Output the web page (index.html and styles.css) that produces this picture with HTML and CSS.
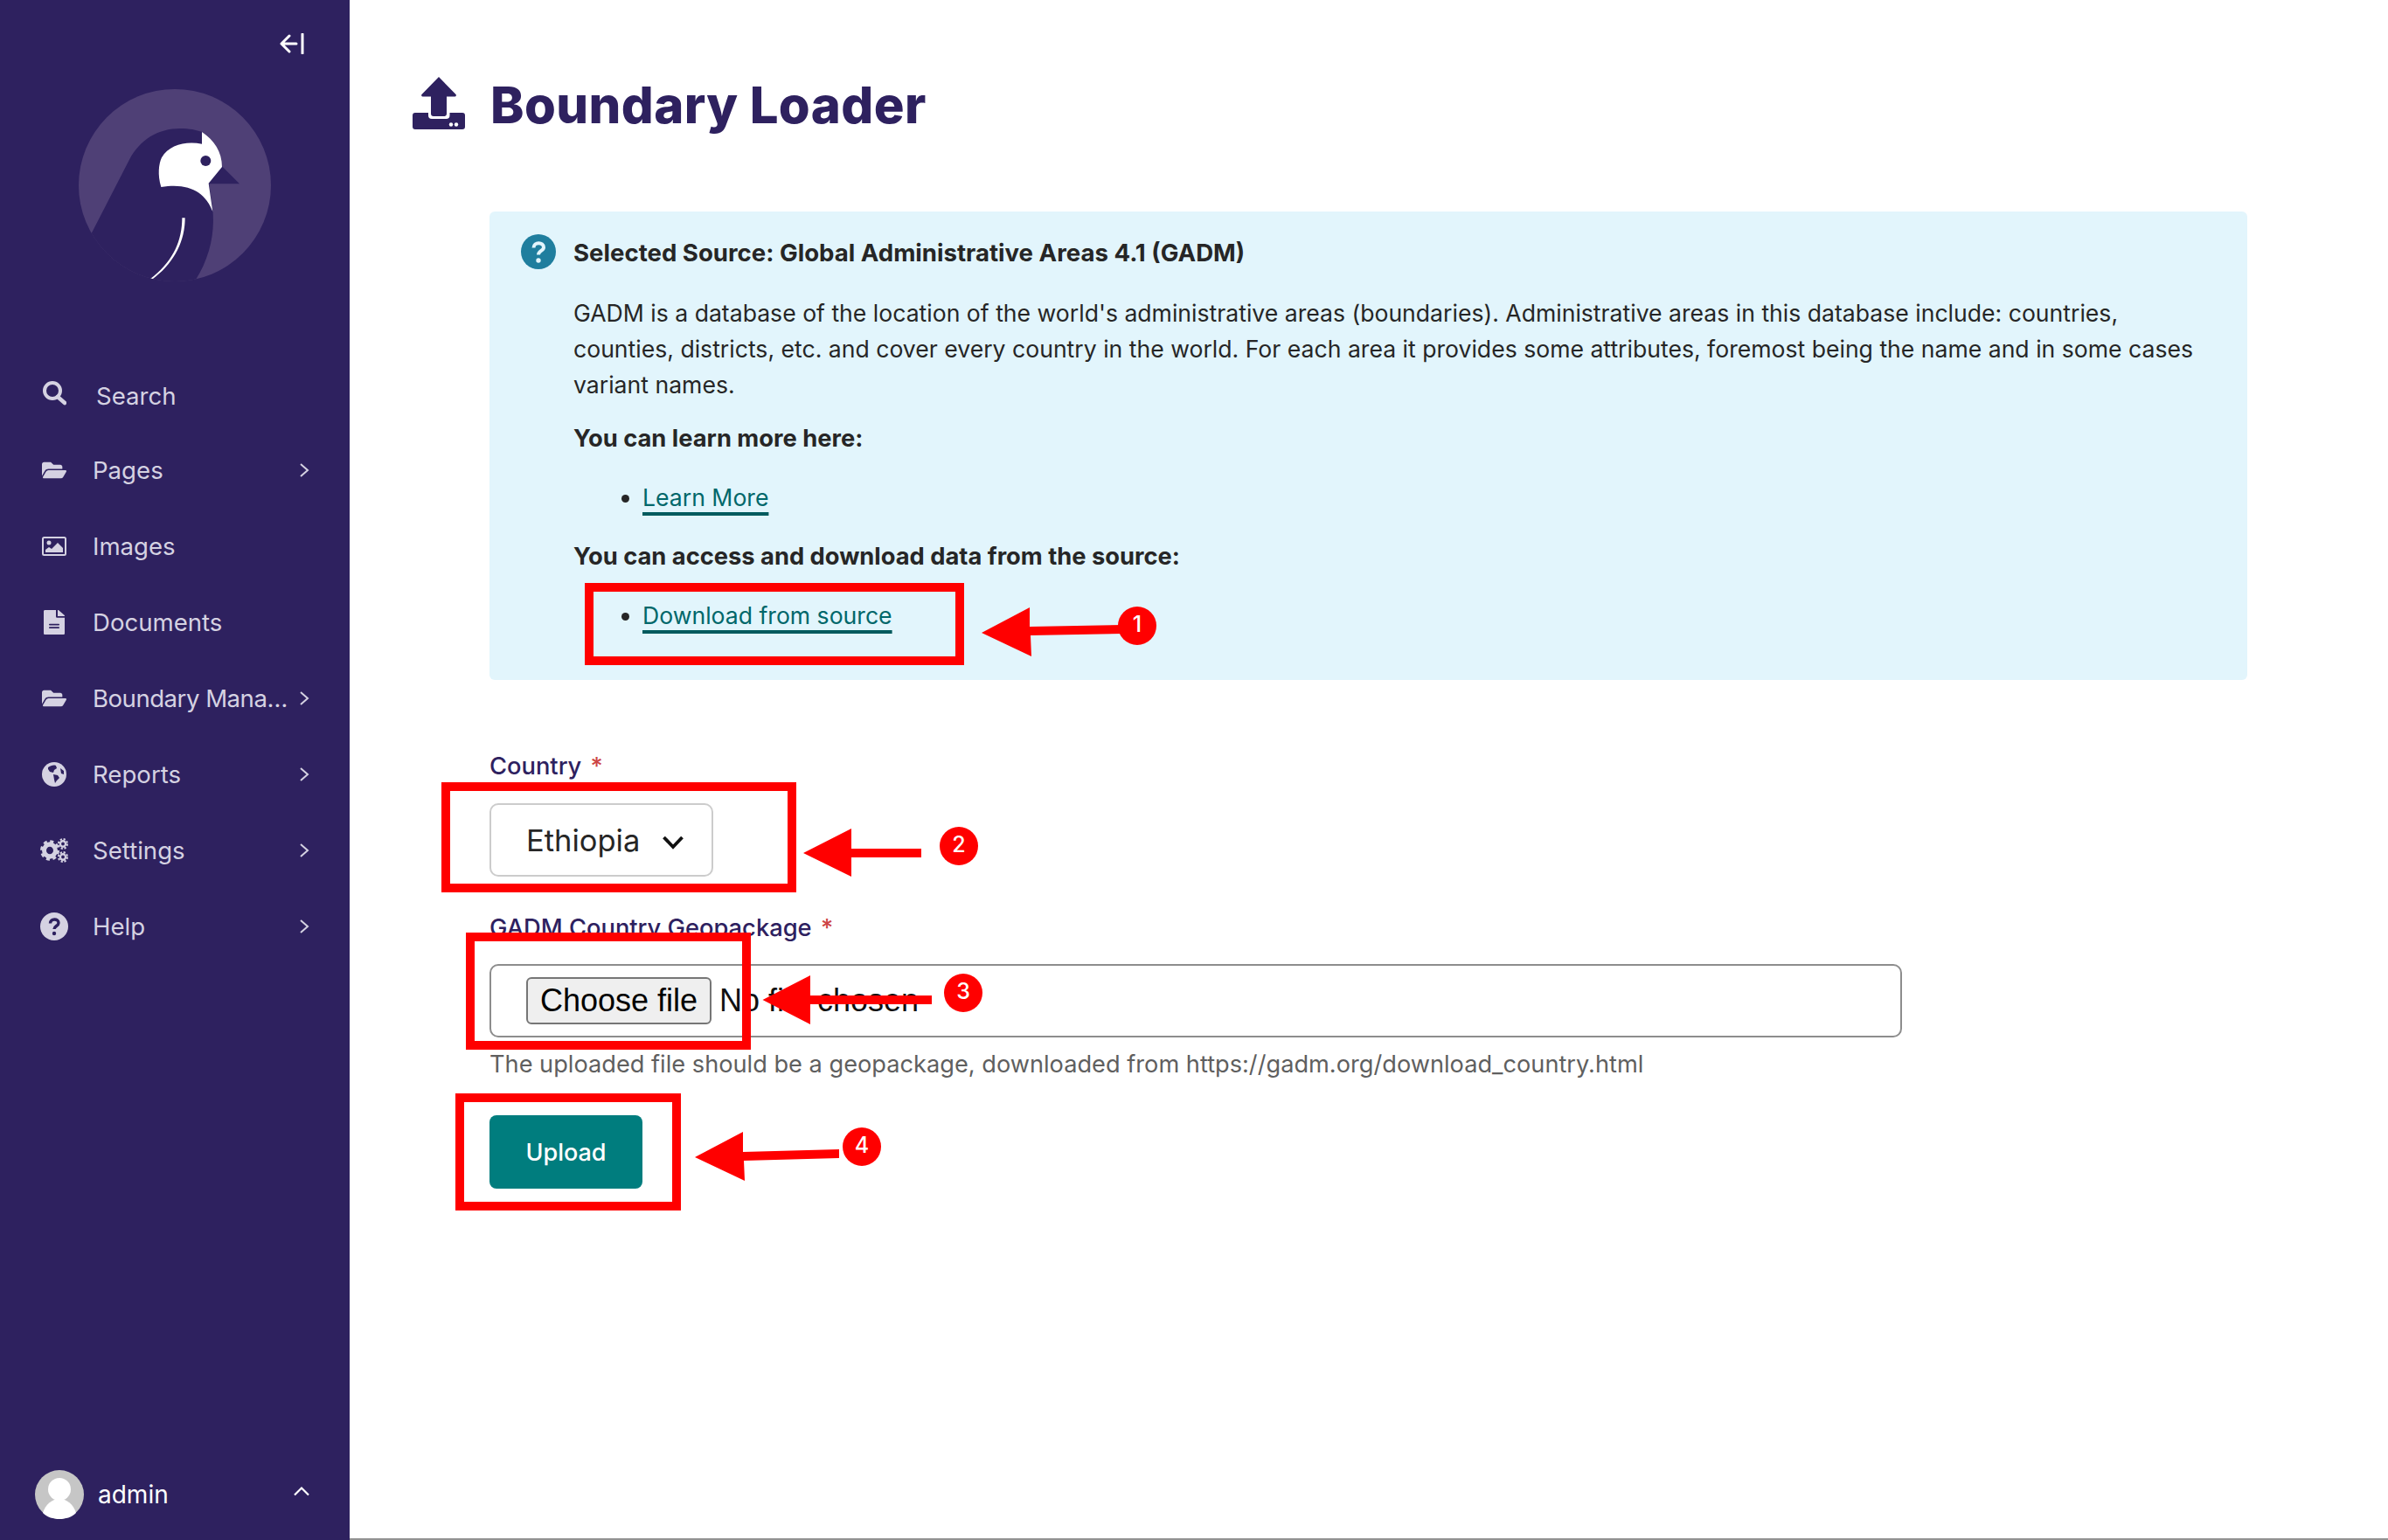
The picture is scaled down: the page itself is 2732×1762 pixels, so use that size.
FILE: index.html
```html
<!DOCTYPE html>
<html lang="en">
<head>
<meta charset="utf-8">
<title>Boundary Loader</title>
<link rel="stylesheet" href="styles.css">
</head>
<body>
<div class="app">
  <aside class="sidebar">
    <div class="collapse-row">
      <svg class="collapse-icon" viewBox="0 0 28 24"><path d="M11 3 2 12l9 9M2 12h17M26 1v22" fill="none" stroke="#fff" stroke-width="3" stroke-linecap="round" stroke-linejoin="round"/></svg>
    </div>
    <svg class="logo" viewBox="270 305 660 660">
      <defs><clipPath id="disc"><circle cx="600" cy="635" r="330"/></clipPath></defs>
      <circle cx="600" cy="635" r="330" fill="#4f4076"/>
      <g clip-path="url(#disc)">
        <path d="M315 798 445 545C480 480 540 440 620 440 650 440 672 445 695 452L762 570 822 630H718L730 720C737 790 725 880 665 970H300Z" fill="#2e215f"/>
        <path d="M693 452C735 480 762 520 762 572L716 628 730 725C705 660 650 625 553 641 540 600 545 560 555 540 580 495 640 482 693 493Z" fill="#fff"/>
        <circle cx="706" cy="551" r="18" fill="#2e215f"/>
        <path d="M625 747H635C635 830 595 905 522 958L516 956C590 900 625 830 625 747Z" fill="#fff"/>
      </g>
    </svg>
    <nav class="nav">
      <a class="nav-item nav-search">
        <svg class="nav-icon" viewBox="0 0 28 28"><circle cx="12" cy="11" r="9" fill="none" stroke="currentColor" stroke-width="4"/><path d="m18 18 8 7" stroke="currentColor" stroke-width="4.500" stroke-linecap="round"/></svg>
        <span class="nav-label">Search</span>
      </a>
      <a class="nav-item">
        <svg class="nav-icon" viewBox="0 0 576 512"><path fill="currentColor" d="M572.694 292.093L500.27 416.248A63.997 63.997 0 0 1 444.989 448H45.025c-18.523 0-30.064-20.093-20.731-36.093l72.424-124.155A64 64 0 0 1 152 256h399.964c18.523 0 30.064 20.093 20.73 36.093zM152 224h328v-48c0-26.51-21.49-48-48-48H272l-64-64H48C21.49 64 0 85.49 0 112v278.046l69.077-118.418C86.214 242.25 117.989 224 152 224z"/></svg>
        <span class="nav-label">Pages</span>
        <svg class="chev" viewBox="0 0 12 18"><path d="m2 2 8 7-8 7" fill="none" stroke="currentColor" stroke-width="2"/></svg>
      </a>
      <a class="nav-item">
        <svg class="nav-icon" viewBox="0 0 28 24"><rect x="1" y="2" width="26" height="20" rx="1.500" fill="none" stroke="currentColor" stroke-width="2"/><circle cx="8" cy="8" r="2.500" fill="currentColor"/><path d="M4 19v-3l4-3 3 2 7-7 6 6v5Z" fill="currentColor"/></svg>
        <span class="nav-label">Images</span>
      </a>
      <a class="nav-item">
        <svg class="nav-icon nav-icon-doc" viewBox="0 0 384 512" preserveAspectRatio="none"><path fill="currentColor" d="M224 136V0H24C10.700 0 0 10.700 0 24v464c0 13.300 10.700 24 24 24h336c13.300 0 24-10.700 24-24V160H248c-13.200 0-24-10.800-24-24zm64 236c0 6.600-5.400 12-12 12H108c-6.600 0-12-5.400-12-12v-8c0-6.600 5.400-12 12-12h168c6.600 0 12 5.400 12 12v8zm0-64c0 6.600-5.400 12-12 12H108c-6.600 0-12-5.400-12-12v-8c0-6.600 5.400-12 12-12h168c6.600 0 12 5.400 12 12v8zm96-186.100v6.100H256V0h6.100c6.400 0 12.500 2.500 17 7l97.900 98c4.500 4.500 7 10.600 7 16.900z"/></svg>
        <span class="nav-label">Documents</span>
      </a>
      <a class="nav-item">
        <svg class="nav-icon" viewBox="0 0 576 512"><path fill="currentColor" d="M572.694 292.093L500.27 416.248A63.997 63.997 0 0 1 444.989 448H45.025c-18.523 0-30.064-20.093-20.731-36.093l72.424-124.155A64 64 0 0 1 152 256h399.964c18.523 0 30.064 20.093 20.73 36.093zM152 224h328v-48c0-26.51-21.49-48-48-48H272l-64-64H48C21.49 64 0 85.49 0 112v278.046l69.077-118.418C86.214 242.25 117.989 224 152 224z"/></svg>
        <span class="nav-label nav-label-cut">Boundary Mana…</span>
        <svg class="chev" viewBox="0 0 12 18"><path d="m2 2 8 7-8 7" fill="none" stroke="currentColor" stroke-width="2"/></svg>
      </a>
      <a class="nav-item">
        <svg class="nav-icon" viewBox="0 0 28 28"><circle cx="14" cy="14" r="14" fill="currentColor"/><path d="M7 6c3-2 6-3 9-2l1 3-3 2-1 3-4-1-2-3ZM13 14l5 1 2 3-3 3-2 3-1-4ZM21 7l4 3v4l-3-1Z" fill="#2e215f"/></svg>
        <span class="nav-label">Reports</span>
        <svg class="chev" viewBox="0 0 12 18"><path d="m2 2 8 7-8 7" fill="none" stroke="currentColor" stroke-width="2"/></svg>
      </a>
      <a class="nav-item">
        <svg class="nav-icon nav-icon-wide" viewBox="0 0 32 26" preserveAspectRatio="none">
          <circle cx="11" cy="13" r="6.500" fill="none" stroke="currentColor" stroke-width="5"/>
          <circle cx="11" cy="13" r="9.500" fill="none" stroke="currentColor" stroke-width="3" stroke-dasharray="4 3.450"/>
          <circle cx="26" cy="6" r="3" fill="none" stroke="currentColor" stroke-width="2.200"/>
          <circle cx="26" cy="6" r="5" fill="none" stroke="currentColor" stroke-width="2" stroke-dasharray="2.200 1.730"/>
          <circle cx="26" cy="20" r="3" fill="none" stroke="currentColor" stroke-width="2.200"/>
          <circle cx="26" cy="20" r="5" fill="none" stroke="currentColor" stroke-width="2" stroke-dasharray="2.200 1.730"/>
        </svg>
        <span class="nav-label">Settings</span>
        <svg class="chev" viewBox="0 0 12 18"><path d="m2 2 8 7-8 7" fill="none" stroke="currentColor" stroke-width="2"/></svg>
      </a>
      <a class="nav-item">
        <svg class="nav-icon nav-icon-help" viewBox="0 0 32 32"><circle cx="16" cy="16" r="16" fill="currentColor"/><path d="M11.500 12.500c0-6 9.500-6 9.500-.5 0 3.500-5 3.500-5 7" fill="none" stroke="#2e215f" stroke-width="3.400"/><circle cx="16" cy="24" r="2.200" fill="#2e215f"/></svg>
        <span class="nav-label">Help</span>
        <svg class="chev" viewBox="0 0 12 18"><path d="m2 2 8 7-8 7" fill="none" stroke="currentColor" stroke-width="2"/></svg>
      </a>
    </nav>
    <div class="account">
      <svg class="avatar" viewBox="0 0 56 56"><circle cx="28" cy="28" r="28" fill="#c6c6c6"/><circle cx="28" cy="22" r="13" fill="#fff"/><path d="M9 49c3-10 11-16 19-16s16 6 19 16c-5 5-12 7-19 7S14 54 9 49Z" fill="#fff"/></svg>
      <span class="account-name">admin</span>
      <svg class="chev-up" viewBox="0 0 18 12"><path d="m1 10.500 8-8 8 8" fill="none" stroke="#fff" stroke-width="2.200"/></svg>
    </div>
  </aside>

  <main class="main">
    <header class="page-head">
      <svg class="page-icon" viewBox="0 0 60 60">
        <path d="M30 0 49.500 20a1.500 1.500 0 0 1-1 2.500H39V42a3 3 0 0 1-3 3H24a3 3 0 0 1-3-3V22.500H11.500a1.500 1.500 0 0 1-1-2.500Z" fill="#2e215f"/>
        <path d="M3 41H18V44a4 4 0 0 0 4 4H38.500a4 4 0 0 0 4-4V41H57a3 3 0 0 1 3 3V57a3 3 0 0 1-3 3H3a3 3 0 0 1-3-3V44a3 3 0 0 1 3-3Z" fill="#2e215f"/>
        <circle cx="44" cy="54.500" r="2.200" fill="#fff"/><circle cx="50" cy="54.500" r="2.200" fill="#fff"/>
      </svg>
      <h1 class="page-title">Boundary Loader</h1>
    </header>

    <section class="info">
      <div class="info-head">
        <svg class="info-icon" viewBox="0 0 40 40"><circle cx="20" cy="20" r="20" fill="#1f7e9e"/><path d="M14.500 15.500c0-7 11.500-7 11.500-.5 0 4-6 4-6 8.500" fill="none" stroke="#e2f5fc" stroke-width="4"/><circle cx="20" cy="30" r="2.700" fill="#e2f5fc"/></svg>
        <strong class="info-title">Selected Source: Global Administrative Areas 4.1 (GADM)</strong>
      </div>
      <div class="info-body">
        <p class="info-text">GADM is a database of the location of the world's administrative areas (boundaries). Administrative areas in this database include: countries, counties, districts, etc. and cover every country in the world. For each area it provides some attributes, foremost being the name and in some cases variant names.</p>
        <p class="info-strong">You can learn more here:</p>
        <ul class="info-list"><li><a class="info-link">Learn More</a></li></ul>
        <p class="info-strong">You can access and download data from the source:</p>
        <ul class="info-list"><li><a class="info-link">Download from source</a></li></ul>
      </div>
    </section>

    <form class="form">
      <label class="field-label field-country">Country <span class="req">*</span></label>
      <div class="select-wrap">
        <select class="select"><option>Ethiopia</option></select>
        <svg class="select-chev" viewBox="0 0 24 16"><path d="m1.500 2 10.500 11L22.500 2" fill="none" stroke="#111" stroke-width="3.800"/></svg>
      </div>
      <label class="field-label field-file">GADM Country Geopackage <span class="req">*</span></label>
      <div class="file">
        <button class="file-button" type="button">Choose file</button>
        <span class="file-name">No file chosen</span>
      </div>
      <p class="help">The uploaded file should be a geopackage, downloaded from https://gadm.org/download_country.html</p>
      <button class="upload" type="button">Upload</button>
    </form>
  </main>
</div>

<div class="annotations">
  <div class="mark mark-1"></div>
  <div class="mark mark-2"></div>
  <div class="mark mark-3"></div>
  <div class="mark mark-4"></div>
  <svg class="arrows" viewBox="0 0 2732 1762">
    <g fill="#ff0000">
      <path d="M1123 724 1178 695V717L1285 715V725L1179 727 1180 751Z"/>
      <path d="M919 976 974 948V971H1054V981H974V1003Z"/>
      <path d="M872.500 1144 927 1116V1139H1066V1149H927V1172Z"/>
      <path d="M795 1324 850 1295V1318L960 1315V1325L851 1328 852 1351Z"/>
    </g>
  </svg>
  <span class="badge badge-1">1</span>
  <span class="badge badge-2">2</span>
  <span class="badge badge-3">3</span>
  <span class="badge badge-4">4</span>
</div>
</body>
</html>
```

FILE: styles.css
```css
* { box-sizing: border-box; }
html, body { margin: 0; padding: 0; height: 100%; }
body { font-family: Inter, "Noto Sans", sans-serif; background: #fff; color: #262626; overflow: hidden; }
.app { display: flex; height: 1762px; }

.sidebar { width: 400px; flex: none; background: #2e215f; display: flex; flex-direction: column; color: #d5d2e2; }
.collapse-row { display: flex; justify-content: flex-end; padding: 38px 52px 0 0; }
.collapse-icon { width: 28px; height: 24px; display: block; }
.logo { width: 220px; height: 220px; margin: 40px 0 0 90px; display: block; }
.nav { display: flex; flex-direction: column; margin-top: 89px; }
.nav-item { height: 87px; display: flex; align-items: center; padding-left: 48px; font-size: 27.600px; }
.nav-search { height: 83px; }
.nav-icon { width: 28px; height: 28px; flex: none; margin-right: 30px; }
.nav-icon-wide { width: 32px; height: 28px; margin-left: -2px; margin-right: 28px; }
.nav-icon-help { width: 32px; height: 32px; margin-left: -2px; margin-right: 28px; }
.nav-icon-doc { width: 24px; margin-left: 2px; margin-right: 32px; }
.nav-search .nav-icon { margin-right: 34px; margin-top: -6px; }
.nav-label { flex: 1; white-space: nowrap; }
.nav-label-cut { letter-spacing: -0.5px; }
.chev { width: 12px; height: 18px; flex: none; margin-right: 46px; }
.account { margin-top: auto; display: flex; align-items: center; padding: 0 46px 24px 40px; }
.avatar { width: 56px; height: 56px; flex: none; margin-right: 16px; }
.account-name { flex: 1; color: #fff; font-size: 28px; }
.chev-up { width: 18px; height: 12px; margin-top: -8px; }

.main { flex: 1; min-width: 0; border-bottom: 2px solid #929292; padding: 88px 0 0 72px; }
.page-head { display: flex; align-items: center; gap: 29px; height: 60px; }
.page-icon { width: 60px; height: 60px; flex: none; }
.page-title { margin: 0; padding-top: 3px; color: #2e215f; font-size: 58px; font-weight: 800; line-height: 60px; letter-spacing: 0.4px; }

.info { margin: 94px 0 0 88px; width: 2011px; height: 536px; background: #e2f5fc; border-radius: 6px; padding: 26px 36px 0; }
.info-head { display: flex; align-items: center; gap: 20px; height: 40px; }
.info-icon { width: 40px; height: 40px; flex: none; }
.info-title { font-size: 27.600px; font-weight: 700; margin-top: 2px; }
.info-body { padding-left: 60px; font-size: 26.600px; line-height: 41px; }
.info-text { margin: 30px 0 20px; }
.info-strong { margin: 0; font-weight: 700; font-size: 27.300px; }
.info-list { margin: 27px 0 26px; padding-left: 79px; }
.info-link { color: #00676a; text-decoration: underline; text-decoration-color: #005b5e; text-decoration-thickness: 4px; text-underline-offset: 7px; }

.form { margin: 79px 0 0 88px; display: flex; flex-direction: column; align-items: flex-start; }
.field-label { color: #2e215f; font-size: 27.300px; font-weight: 500; line-height: 40px; height: 40px; }
.req { color: #cd4444; margin-left: 3px; }
.select-wrap { position: relative; margin-top: 22px; width: 256px; height: 84px; }
.select { appearance: none; width: 256px; height: 84px; background: #fff; border: 2px solid #ccc; border-radius: 10px; padding: 0 0 0 40px; font-family: Inter, sans-serif; font-size: 34.500px; color: #262626; }
.select-chev { position: absolute; left: 198px; top: 37px; width: 24px; height: 16px; }
.field-file { margin-top: 39px; }
.file { margin-top: 21px; width: 1616px; height: 84px; border: 2px solid #8d8d8d; border-radius: 10px; padding: 0 0 0 40px; font-family: "Liberation Sans", Arial, sans-serif; font-size: 36px; color: #111; background: #fff; display: flex; align-items: center; gap: 9px; }
.file-button { height: 54px; width: 212px; padding: 0; background: #efefef; border: 2px solid #767676; border-radius: 6px; font: inherit; color: #000; }
.help { margin: 11px 0 0; font-size: 27.200px; line-height: 40px; color: #5f5f5f; white-space: nowrap; }
.upload { margin-top: 38px; width: 175px; height: 84px; background: #007d7e; color: #fff; border: 0; border-radius: 8px; font-family: Inter, sans-serif; font-size: 27px; font-weight: 500; }

.annotations { position: absolute; inset: 0; pointer-events: none; }
.arrows { position: absolute; left: 0; top: 0; width: 2732px; height: 1762px; }
.mark { position: absolute; border: 10px solid #ff0000; }
.mark-1 { left: 669px; top: 667px; width: 434px; height: 94px; }
.mark-2 { left: 505px; top: 895px; width: 406px; height: 126px; }
.mark-3 { left: 533px; top: 1067px; width: 326px; height: 134px; }
.mark-4 { left: 521px; top: 1251px; width: 258px; height: 134px; }
.badge { position: absolute; width: 44px; height: 44px; margin: -22px 0 0 -22px; border-radius: 50%; background: #ff0000; color: #fff; font-size: 25px; font-weight: 500; line-height: 40px; text-align: center; }
.badge-1 { left: 1301px; top: 716px; }
.badge-2 { left: 1097px; top: 968px; }
.badge-3 { left: 1102px; top: 1136px; }
.badge-4 { left: 986px; top: 1312px; }
```
